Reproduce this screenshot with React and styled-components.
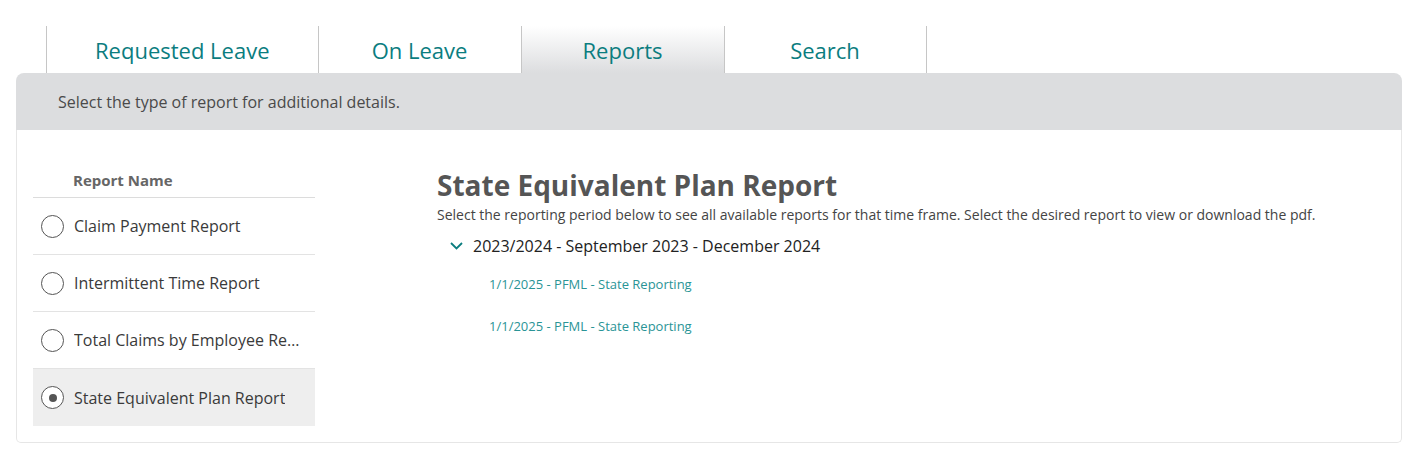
import styled, { createGlobalStyle, css } from 'styled-components';

const GlobalStyle = createGlobalStyle`
  body {
    margin: 0;
    background: #fff;
    font-family: 'Open Sans', 'Noto Sans', sans-serif;
  }
`;

const Page = styled.div`
  padding: 26px 8px 20px 16px;
`;

const TabBar = styled.div`
  display: flex;
  padding-left: 30px;
`;

const Tab = styled.div`
  min-width: 203px;
  height: 47px;
  padding: 0 48px;
  box-sizing: border-box;
  display: flex;
  align-items: center;
  justify-content: center;
  border-left: 1px solid #c6c6c6;
  font-size: 22px;
  color: #0b7d7f;
  cursor: pointer;
  white-space: nowrap;

  &:last-child {
    border-right: 1px solid #c6c6c6;
  }

  ${p =>
    p.$active &&
    css`
      background: linear-gradient(to bottom, #ffffff 0%, #dcdddf 100%);
    `}
`;

const InfoBar = styled.div`
  background: #dcdddf;
  border-radius: 8px 8px 0 0;
  height: 57px;
  display: flex;
  align-items: center;
  padding-left: 42px;
  font-size: 16px;
  color: #4a4a4a;
`;

const Panel = styled.div`
  border: 1px solid #e6e6e6;
  border-top: none;
  border-radius: 0 0 5px 5px;
  display: grid;
  grid-template-columns: 282px 1fr;
  column-gap: 122px;
  padding: 34px 16px 16px 16px;
`;

const List = styled.div`
  display: flex;
  flex-direction: column;
`;

const ListHeader = styled.div`
  height: 33px;
  padding-left: 40px;
  border-bottom: 1px solid #dcdcdc;
  font-size: 15px;
  font-weight: 700;
  color: #666;
  line-height: 32px;
`;

const Row = styled.div`
  height: 56px;
  display: flex;
  align-items: center;
  gap: 10px;
  padding: 0 14px 0 8px;
  border-bottom: 1px solid #e3e3e3;
  font-size: 16px;
  color: #3a3a3a;
  cursor: pointer;

  &:last-child {
    border-bottom: none;
    height: 57px;
  }

  ${p =>
    p.$selected &&
    css`
      background: #eeeeee;
    `}
`;

const Radio = styled.span`
  width: 23px;
  height: 23px;
  flex: none;
  border: 1px solid #555;
  border-radius: 50%;
  box-sizing: border-box;
  background: #fff;
  display: flex;
  align-items: center;
  justify-content: center;

  &::after {
    content: '';
    width: 8px;
    height: 8px;
    border-radius: 50%;
    background: #555;
    display: ${p => (p.$checked ? 'block' : 'none')};
  }
`;

const RowLabel = styled.span`
  white-space: nowrap;
  overflow: hidden;
  text-overflow: ellipsis;
`;

const Content = styled.div`
  display: flex;
  flex-direction: column;
`;

const Title = styled.h1`
  margin: 3px 0 0;
  font-size: 28px;
  line-height: 36px;
  font-weight: 700;
  color: #555;
`;

const Subtitle = styled.p`
  margin: 2px 0 0;
  font-size: 14px;
  line-height: 19px;
  color: #444;
`;

const PeriodHeader = styled.div`
  display: flex;
  align-items: center;
  gap: 10px;
  margin-top: 8px;
  padding-left: 13px;
  height: 27px;
  font-size: 16px;
  color: #222;
  cursor: pointer;
`;

const ReportLinks = styled.div`
  display: flex;
  flex-direction: column;
  gap: 24px;
  padding: 16px 0 0 52px;
`;

const ReportLink = styled.a`
  font-size: 13px;
  line-height: 18px;
  color: #2a9496;
  text-decoration: none;
  cursor: pointer;
`;

const tabs = ['Requested Leave', 'On Leave', 'Reports', 'Search'];
const reports = [
  'Claim Payment Report',
  'Intermittent Time Report',
  'Total Claims by Employee Report',
  'State Equivalent Plan Report',
];

function Chevron() {
  return (
    <svg width="13" height="8" viewBox="0 0 13 8" fill="none">
      <path d="M1 1l5.5 5.5L12 1" stroke="#0b7d7f" strokeWidth="1.8" />
    </svg>
  );
}

export default function App() {
  const selected = 'State Equivalent Plan Report';
  return (
    <Page>
      <GlobalStyle />
      <TabBar>
        {tabs.map(t => (
          <Tab key={t} $active={t === 'Reports'}>
            {t}
          </Tab>
        ))}
      </TabBar>
      <InfoBar>Select the type of report for additional details.</InfoBar>
      <Panel>
        <List>
          <ListHeader>Report Name</ListHeader>
          {reports.map(r => (
            <Row key={r} $selected={r === selected}>
              <Radio $checked={r === selected} />
              <RowLabel>{r}</RowLabel>
            </Row>
          ))}
        </List>
        <Content>
          <Title>State Equivalent Plan Report</Title>
          <Subtitle>
            Select the reporting period below to see all available reports for that time frame. Select the desired
            report to view or download the pdf.
          </Subtitle>
          <PeriodHeader>
            <Chevron />
            2023/2024 - September 2023 - December 2024
          </PeriodHeader>
          <ReportLinks>
            <ReportLink>1/1/2025 - PFML - State Reporting</ReportLink>
            <ReportLink>1/1/2025 - PFML - State Reporting</ReportLink>
          </ReportLinks>
        </Content>
      </Panel>
    </Page>
  );
}
